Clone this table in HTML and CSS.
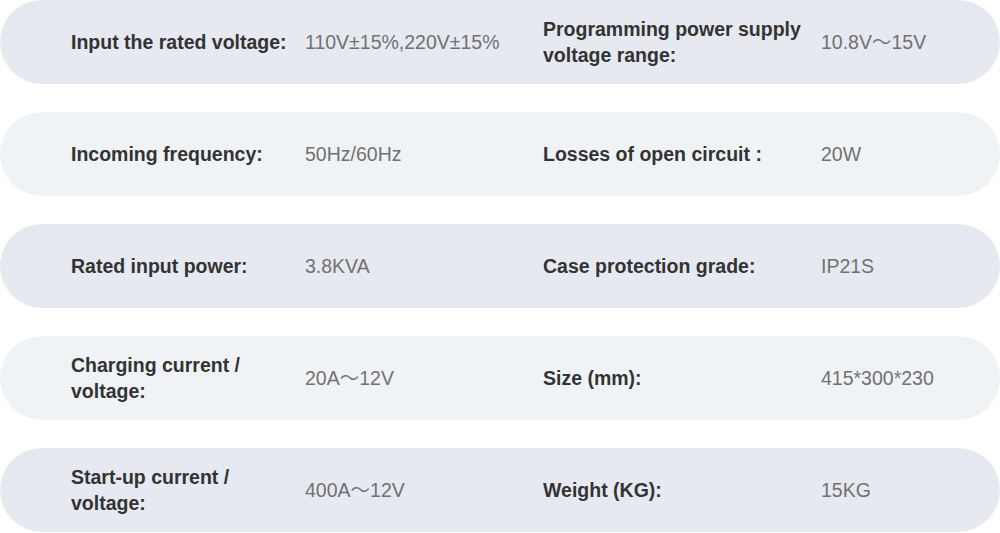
FILE: index.html
```html
<!DOCTYPE html>
<html lang="en">
<head>
<meta charset="utf-8">
<title>Specifications</title>
<link rel="stylesheet" href="styles.css">
</head>
<body>
<div class="specs">
  <div class="row dark">
    <div class="label">Input the rated voltage:</div>
    <div class="value">110V±15%,220V±15%</div>
    <div class="label">Programming power supply voltage range:</div>
    <div class="value">10.8V～15V</div>
  </div>
  <div class="row light">
    <div class="label">Incoming frequency:</div>
    <div class="value">50Hz/60Hz</div>
    <div class="label">Losses of open circuit :</div>
    <div class="value">20W</div>
  </div>
  <div class="row dark">
    <div class="label">Rated input power:</div>
    <div class="value">3.8KVA</div>
    <div class="label">Case protection grade:</div>
    <div class="value">IP21S</div>
  </div>
  <div class="row light">
    <div class="label">Charging current / voltage:</div>
    <div class="value">20A～12V</div>
    <div class="label">Size (mm):</div>
    <div class="value">415*300*230</div>
  </div>
  <div class="row dark">
    <div class="label">Start-up current / voltage:</div>
    <div class="value">400A～12V</div>
    <div class="label">Weight (KG):</div>
    <div class="value">15KG</div>
  </div>
</div>
</body>
</html>
```

FILE: styles.css
```css
html, body {
  margin: 0;
  padding: 0;
  background: #ffffff;
}

body {
  font-family: "Liberation Sans", Arial, "Noto Sans CJK SC", sans-serif;
  font-size: 19.5px;
  line-height: 26px;
}

.specs {
  display: flex;
  flex-direction: column;
  gap: 28px;
  width: 1000px;
}

.row {
  height: 84px;
  border-radius: 42px;
  padding-left: 71px;
  box-sizing: border-box;
  display: grid;
  grid-template-columns: 234px 238px 278px 1fr;
  align-items: center;
}

.row.dark {
  background: #e6eaf0;
}

.row.light {
  background: #f0f3f6;
}

.label {
  font-weight: bold;
  color: #333333;
  padding-right: 8px;
}

.value {
  color: #717171;
}
```
